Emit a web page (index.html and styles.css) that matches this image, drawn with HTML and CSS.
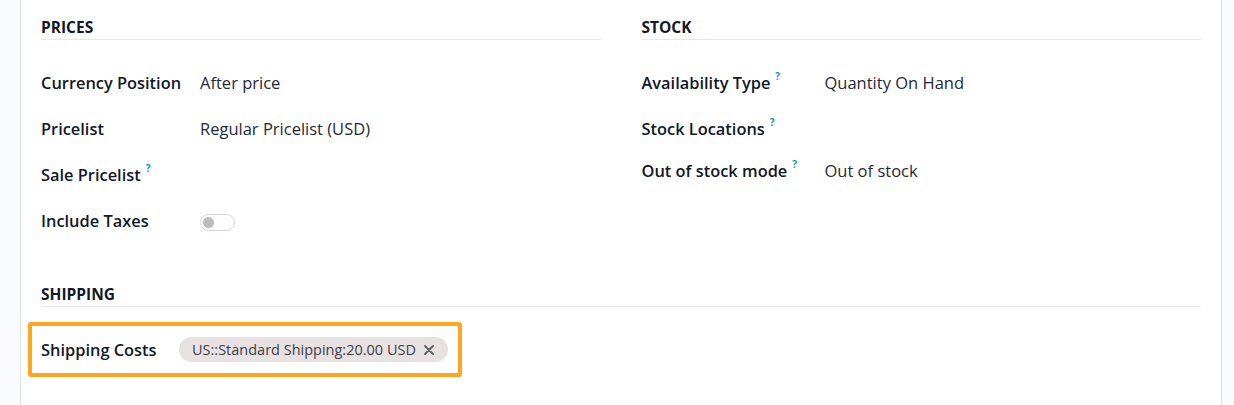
FILE: index.html
```html
<!DOCTYPE html>
<html lang="en">
<head>
  <meta charset="UTF-8" />
  <meta name="viewport" content="width=device-width, initial-scale=1.0"/>
  <title>Website Settings</title>
  <link rel="stylesheet" href="styles.css">
</head>
<body>

  <div class="sheet">
    <div class="columns">
      <div class="group prices">
        <div class="group-title">Prices</div>
        <div class="field">
          <label>Currency Position</label>
          <span class="value">After price</span>
        </div>
        <div class="field">
          <label>Pricelist</label>
          <span class="value">Regular Pricelist (USD)</span>
        </div>
        <div class="field">
          <label>Sale Pricelist<sup class="help">?</sup></label>
          <span class="value"></span>
        </div>
        <div class="field">
          <label>Include Taxes</label>
          <span class="value"><span class="toggle"><span class="knob"></span></span></span>
        </div>
      </div>

      <div class="group stock">
        <div class="group-title">Stock</div>
        <div class="field">
          <label>Availability Type<sup class="help">?</sup></label>
          <span class="value">Quantity On Hand</span>
        </div>
        <div class="field">
          <label>Stock Locations<sup class="help">?</sup></label>
          <span class="value"></span>
        </div>
        <div class="field short">
          <label>Out of stock mode<sup class="help">?</sup></label>
          <span class="value">Out of stock</span>
        </div>
      </div>
    </div>

    <div class="group shipping">
      <div class="group-title">Shipping</div>
      <div class="highlight">
        <div class="field">
          <label>Shipping Costs</label>
          <span class="value">
            <span class="tag">US::Standard Shipping:20.00 USD
              <svg class="tag-remove" width="10" height="10" viewBox="0 0 10 10">
                <path d="M1 1 L9 9 M9 1 L1 9" stroke="#5f5f5f" stroke-width="1.9" stroke-linecap="round"/>
              </svg>
            </span>
          </span>
        </div>
      </div>
    </div>
  </div>

</body>
</html>
```

FILE: styles.css
```css
body {
  margin: 0;
  font-family: "Open Sans", "Noto Sans", Arial, sans-serif;
  background-color: #f9fafb;
  color: #1f2937;
}

.sheet {
  background: #fff;
  margin: 0 12px 0 20px;
  border-left: 1px solid #dee2e6;
  border-right: 1px solid #dee2e6;
  padding: 15px 20px 0 20px;
  height: 405px;
  box-sizing: border-box;
}

.columns {
  display: grid;
  grid-template-columns: 1fr 1fr;
  gap: 41px;
}

.group-title {
  font-size: 15.5px;
  font-weight: 700;
  text-transform: uppercase;
  color: #111827;
  line-height: 24px;
  border-bottom: 1px solid #e5e7eb;
  margin-bottom: 19px;
}

.field {
  display: flex;
  align-items: center;
  height: 46px;
  font-size: 16.5px;
}

.field.short {
  height: 38px;
}

.field label {
  font-weight: 600;
  font-size: 16.4px;
  color: #111827;
  flex: none;
}

.prices .field label {
  width: 159px;
}

.stock .field label {
  width: 183px;
}

.shipping .field label {
  width: 138px;
}

.help {
  color: #1a8fc0;
  font-size: 10px;
  font-weight: 700;
  line-height: 0;
  margin-left: 5px;
  vertical-align: 9px;
}

.toggle {
  display: inline-block;
  position: relative;
  width: 33px;
  height: 15px;
  border: 1px solid #d1d5db;
  border-radius: 9px;
  vertical-align: middle;
}

.toggle .knob {
  position: absolute;
  left: 2px;
  top: 2px;
  width: 11px;
  height: 11px;
  border-radius: 50%;
  background: #bdbdbd;
}

.shipping {
  margin-top: 39px;
}

.shipping .group-title {
  margin-bottom: 15px;
}

.highlight {
  display: inline-block;
  margin-left: -13px;
  padding: 0 10px 0 9px;
  border: 4px solid #ffa51f;
  border-radius: 3px;
}

.highlight .field {
  height: 47px;
}

.tag {
  display: inline-flex;
  align-items: center;
  height: 25px;
  padding: 0 14px 0 13px;
  border-radius: 13px;
  background: #e7e1e1;
  color: #3f3f46;
  font-size: 14.5px;
}

.tag-remove {
  margin-left: 8px;
}
```
